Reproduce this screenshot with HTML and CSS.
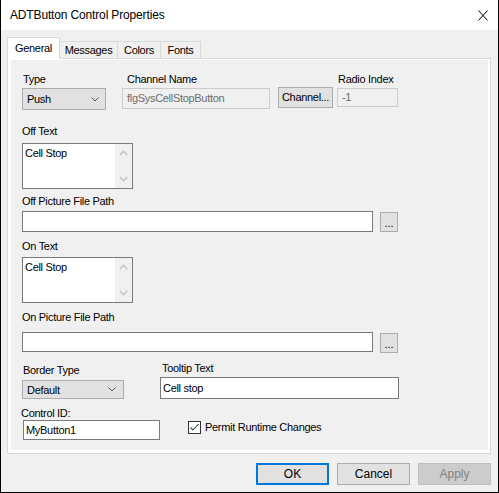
FILE: index.html
```html
<!DOCTYPE html>
<html>
<head>
<meta charset="utf-8">
<link rel="stylesheet" href="styles.css">
</head>
<body>
<div class="window">
  <div class="titlebar">
    <span class="title">ADTButton Control Properties</span>
    <svg class="close" width="10" height="11" viewBox="0 0 10 11"><path d="M0.5 0.5 L9.5 10.5 M9.5 0.5 L0.5 10.5" stroke="#000" stroke-width="1" fill="none"/></svg>
  </div>
  <div class="body">
    <div class="tabs">
      <div class="tab active t-general">General</div>
      <div class="tab t-messages">Messages</div>
      <div class="tab t-colors">Colors</div>
      <div class="tab t-fonts">Fonts</div>
    </div>
    <div class="tabctl">
      <div class="page">
        <div class="row1">
          <div class="col-type">
            <div class="lbl">Type</div>
            <div class="select sel-type"><span>Push</span>
              <svg width="8" height="5" viewBox="0 0 8 5"><path d="M0.5 0.5 L4 4 L7.5 0.5" stroke="#555" fill="none"/></svg>
            </div>
          </div>
          <div class="col-chan">
            <div class="lbl">Channel Name</div>
            <div class="input dis in-chan">flgSysCellStopButton</div>
          </div>
          <div class="btn btn-chan">Channel...</div>
          <div class="col-radio">
            <div class="lbl">Radio Index</div>
            <div class="input dis in-radio">-1</div>
          </div>
        </div>

        <div class="lbl lbl-off">Off Text</div>
        <div class="memo">
          <div class="memo-text">Cell Stop</div>
          <div class="memo-sb">
            <svg width="9" height="6" viewBox="0 0 9 6"><path d="M0.8 5 L4.5 1.2 L8.2 5" stroke="#c2c2c2" stroke-width="1.4" fill="none"/></svg>
            <svg width="9" height="6" viewBox="0 0 9 6"><path d="M0.8 1 L4.5 4.8 L8.2 1" stroke="#c2c2c2" stroke-width="1.4" fill="none"/></svg>
          </div>
        </div>

        <div class="lbl lbl-offpic">Off Picture File Path</div>
        <div class="pathrow">
          <div class="input in-path"></div>
          <div class="btn btn-dots">...</div>
        </div>

        <div class="lbl lbl-on">On Text</div>
        <div class="memo">
          <div class="memo-text">Cell Stop</div>
          <div class="memo-sb">
            <svg width="9" height="6" viewBox="0 0 9 6"><path d="M0.8 5 L4.5 1.2 L8.2 5" stroke="#c2c2c2" stroke-width="1.4" fill="none"/></svg>
            <svg width="9" height="6" viewBox="0 0 9 6"><path d="M0.8 1 L4.5 4.8 L8.2 1" stroke="#c2c2c2" stroke-width="1.4" fill="none"/></svg>
          </div>
        </div>

        <div class="lbl lbl-onpic">On Picture File Path</div>
        <div class="pathrow">
          <div class="input in-path in-path2"></div>
          <div class="btn btn-dots">...</div>
        </div>

        <div class="row6">
          <div class="col-border">
            <div class="lbl">Border Type</div>
            <div class="select sel-border"><span>Default</span>
              <svg width="8" height="5" viewBox="0 0 8 5"><path d="M0.5 0.5 L4 4 L7.5 0.5" stroke="#555" fill="none"/></svg>
            </div>
          </div>
          <div class="col-tip">
            <div class="lbl">Tooltip Text</div>
            <div class="input in-tip">Cell stop</div>
          </div>
        </div>

        <div class="row7">
          <div class="col-id">
            <div class="lbl">Control ID:</div>
            <div class="input in-id">MyButton1</div>
          </div>
          <div class="check">
            <span class="box"><svg width="11" height="11" viewBox="0 0 11 11"><path d="M1.5 5.5 L4 8 L9.5 2" stroke="#444" stroke-width="1.1" fill="none"/></svg></span>
            <span class="lbl">Permit Runtime Changes</span>
          </div>
        </div>
      </div>
    </div>
    <div class="footer">
      <div class="fbtn default">OK</div>
      <div class="fbtn">Cancel</div>
      <div class="fbtn disabled">Apply</div>
    </div>
  </div>
</div>
</body>
</html>
```

FILE: styles.css
```css
* { box-sizing: border-box; }
html, body { margin: 0; padding: 0; background: #fff; }
body {
  font-family: "Liberation Sans", Arial, sans-serif;
  font-size: 11px;
  letter-spacing: -0.3px;
  color: #000;
}
.window {
  width: 499px;
  height: 493px;
  border: 1px solid #000;
  border-top: none;
  background: #f0f0f0;
  display: flex;
  flex-direction: column;
}
.titlebar {
  height: 30px;
  flex: none;
  background: #fff;
  display: flex;
  align-items: center;
  justify-content: space-between;
  padding: 0 10px 0 9px;
}
.title { font-size: 12px; letter-spacing: -0.15px; }
.close { display: block; margin-top: 1px; }

.body {
  flex: 1;
  display: flex;
  flex-direction: column;
  padding: 7px 7px 0 6px;
}
.tabs {
  display: flex;
  align-items: flex-end;
  height: 21px;
  position: relative;
  z-index: 1;
}
.tab {
  height: 17px;
  border: 1px solid #d9d9d9;
  border-bottom: none;
  background: #f0f0f0;
  line-height: 16px;
  text-align: center;
  margin-left: -1px;
  white-space: nowrap;
}
.tab.active {
  height: 22px;
  margin-bottom: -1px;
  margin-left: 0;
  background: #fff;
  padding-top: 2px;
  position: relative;
  z-index: 2;
}
.t-general { width: 53px; }
.t-messages { width: 59px; }
.t-colors { width: 44px; }
.t-fonts { width: 41px; }

.tabctl {
  height: 396px;
  flex: none;
  border: 1px solid #d9d9d9;
  background: #fff;
  padding: 1px 2px 3px 3px;
}
.page {
  height: 100%;
  background: #f0f0f0;
  padding: 12px 0 0 11px;
}
.lbl {
  height: 14px;
  line-height: 14px;
  white-space: nowrap;
}
.select {
  border: 1px solid #adadad;
  background: #e1e1e1;
  display: flex;
  align-items: center;
  justify-content: space-between;
  padding: 0 6px 0 4px;
}
.select svg { display: block; }
.input {
  border: 1px solid #7a7a7a;
  background: #fff;
  padding: 0 2px;
  white-space: nowrap;
  overflow: hidden;
}
.input.dis {
  border-color: #cccccc;
  background: #f0f0f0;
  color: #6d6d6d;
  padding-left: 4px;
}
.btn {
  border: 1px solid #adadad;
  background: #e1e1e1;
  text-align: center;
  white-space: nowrap;
}

/* row 1 */
.row1 { display: flex; align-items: flex-start; }
.col-type { width: 84px; }
.col-type .lbl { padding-left: 1px; margin-bottom: 2px; }
.sel-type { height: 22px; }
.col-chan { width: 148px; margin-left: 16px; }
.col-chan .lbl { padding-left: 5px; margin-bottom: 2px; }
.in-chan { height: 21px; line-height: 19px; }
.btn-chan {
  width: 55px;
  height: 21px;
  line-height: 19px;
  margin-left: 8px;
  margin-top: 15px;
}
.col-radio { width: 61px; margin-left: 4px; }
.col-radio .lbl { padding-left: 1px; margin-bottom: 2px; }
.in-radio { height: 19px; line-height: 17px; padding-left: 5px; }

/* memo boxes */
.memo {
  width: 111px;
  height: 46px;
  border: 1px solid #7a7a7a;
  background: #fff;
  display: flex;
}
.memo-text { flex: 1; padding: 2px 2px; line-height: 14px; }
.memo-sb {
  width: 17px;
  background: #f0f0f0;
  display: flex;
  flex-direction: column;
  justify-content: space-between;
  align-items: center;
  padding: 6px 0 6px;
}
.memo-sb svg { display: block; }

.lbl-off { margin-top: 14px; margin-bottom: 5px; }
.lbl-offpic { margin-top: 5px; margin-bottom: 3px; }
.lbl-on { margin-top: 7px; margin-bottom: 4px; }
.lbl-onpic { margin-top: 7px; margin-bottom: 8px; }

.pathrow { display: flex; align-items: flex-start; }
.in-path { width: 351px; height: 21px; }
.in-path2 { height: 20px; }
.btn-dots {
  width: 18px;
  height: 20px;
  margin-left: 7px;
  margin-top: 1px;
  padding-top: 2px;
  line-height: 16px;
  letter-spacing: 0;
}

/* row 6 */
.row6 { display: flex; align-items: flex-start; }
.col-border { width: 102px; padding-top: 10px; }
.col-border .lbl { margin-bottom: 3px; padding-left: 1px; }
.sel-border { height: 19px; padding-right: 7px; }
.col-tip { margin-left: 36px; padding-top: 8px; }
.col-tip .lbl { padding-left: 2px; margin-bottom: 2px; }
.in-tip { width: 239px; height: 22px; line-height: 20px; }

/* row 7 */
.row7 { display: flex; align-items: flex-start; margin-top: 7px; }
.col-id .lbl { margin-left: -1px; }
.in-id { width: 137px; height: 20px; line-height: 18px; margin-left: 1px; }
.check {
  display: flex;
  align-items: center;
  gap: 4px;
  margin-left: 28px;
  margin-top: 14px;
}
.box {
  width: 13px;
  height: 13px;
  border: 1px solid #333;
  background: #fff;
  display: flex;
  align-items: center;
  justify-content: center;
}
.box svg { display: block; }

/* footer */
.footer {
  display: flex;
  justify-content: flex-end;
  gap: 8px;
  padding-top: 9px;
}
.fbtn {
  width: 73px;
  height: 22px;
  line-height: 20px;
  text-align: center;
  border: 1px solid #adadad;
  background: #e1e1e1;
  font-size: 12px;
  letter-spacing: 0;
}
.fbtn.default {
  border-color: #0078d7;
  box-shadow: inset 0 0 0 1px #0078d7;
}
.fbtn.disabled {
  background: #cccccc;
  border-color: #bfbfbf;
  color: #838383;
}
```
